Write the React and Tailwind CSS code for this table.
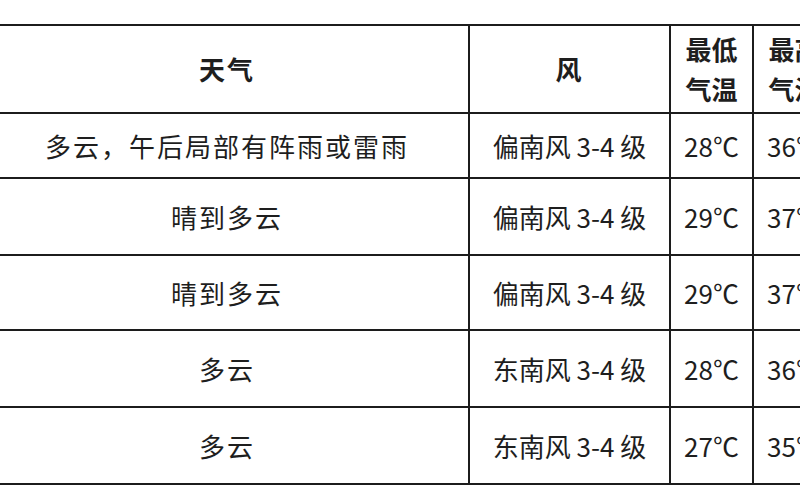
const rows = [
  { weather: "多云，午后局部有阵雨或雷雨", wind: "偏南风 3-4 级", low: "28℃", high: "36℃", h: "h-[65px]" },
  { weather: "晴到多云", wind: "偏南风 3-4 级", low: "29℃", high: "37℃", h: "h-[77px]" },
  { weather: "晴到多云", wind: "偏南风 3-4 级", low: "29℃", high: "37℃", h: "h-[75px]" },
  { weather: "多云", wind: "东南风 3-4 级", low: "28℃", high: "36℃", h: "h-[77px]" },
  { weather: "多云", wind: "东南风 3-4 级", low: "27℃", high: "35℃", h: "h-[77px]" },
];

const cell = "border-2 border-[#1c1c1c] text-center align-middle p-0 whitespace-nowrap";

export default function App() {
  return (
    <div
      className="h-[500px] w-[800px] overflow-hidden bg-white text-[#1e1e1e]"
      style={{ fontFamily: '"Noto Sans CJK SC", "Noto Sans", sans-serif' }}
    >
      <table className="mt-[24px] ml-[-16px] w-[851px] min-w-[851px] table-fixed border-collapse text-[26px] leading-none tracking-[2px]">
        <colgroup>
          <col className="w-[484px]" />
          <col className="w-[201px]" />
          <col className="w-[83px]" />
          <col className="w-[83px]" />
        </colgroup>
        <thead>
          <tr className="h-[88px]">
            <th className={`${cell} font-bold`}>天气</th>
            <th className={`${cell} font-bold`}>风</th>
            <th className={`${cell} font-bold leading-[40px] tracking-normal`}>
              最低
              <br />
              气温
            </th>
            <th className={`${cell} font-bold leading-[40px] tracking-normal`}>
              最高
              <br />
              气温
            </th>
          </tr>
        </thead>
        <tbody>
          {rows.map((r, i) => (
            <tr key={i} className={r.h}>
              <td className={`${cell} font-normal`}>{r.weather}</td>
              <td className={`${cell} font-normal tracking-normal`}>{r.wind}</td>
              <td className={`${cell} font-normal tracking-normal`}>{r.low}</td>
              <td className={`${cell} font-normal tracking-normal`}>{r.high}</td>
            </tr>
          ))}
        </tbody>
      </table>
    </div>
  );
}
